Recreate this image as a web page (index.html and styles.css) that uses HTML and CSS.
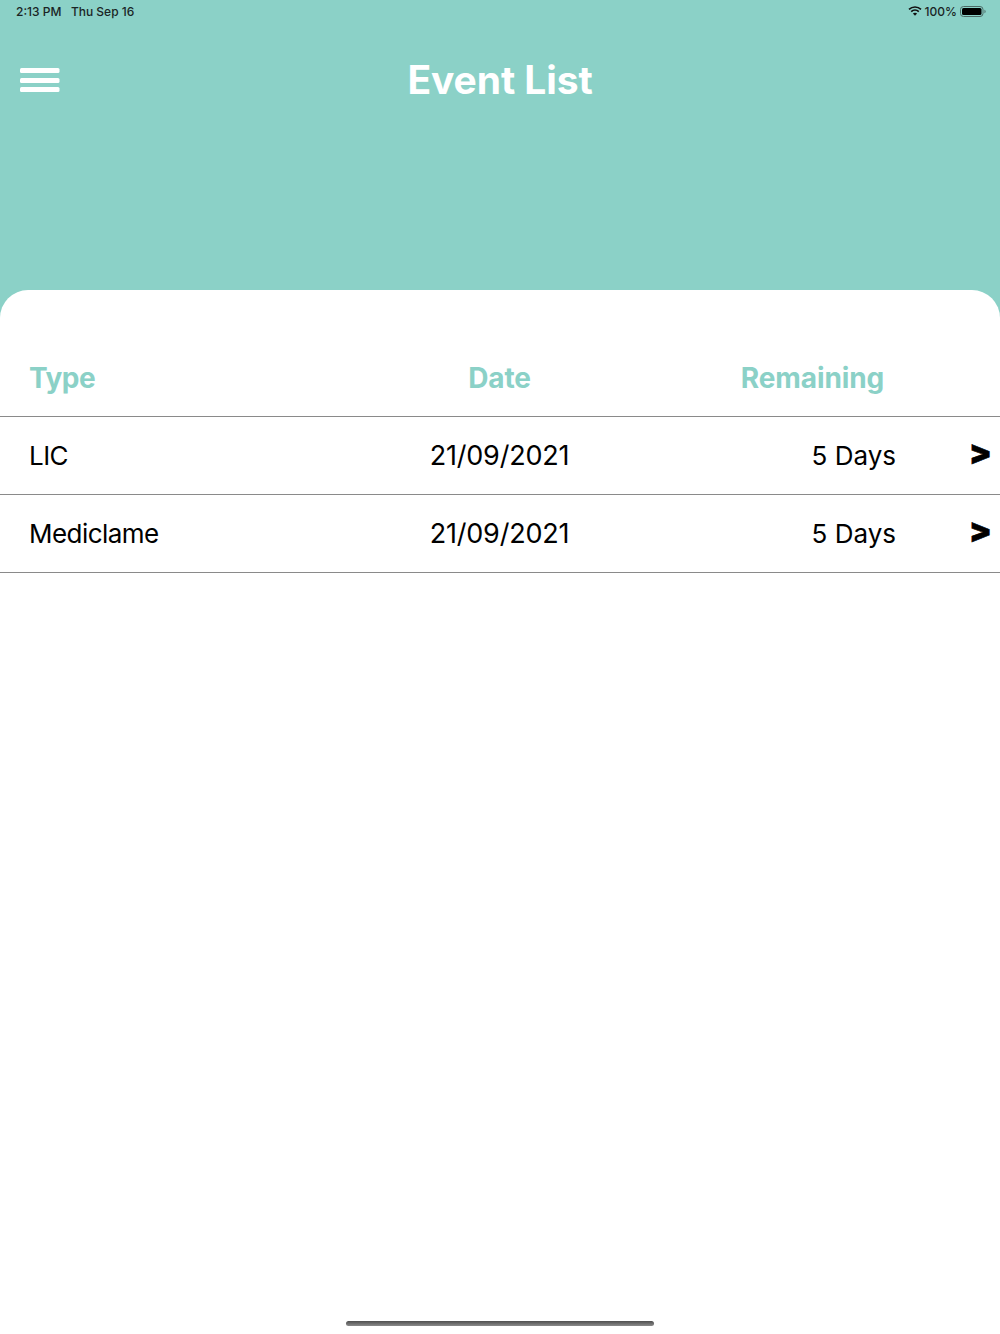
FILE: index.html
```html
<!DOCTYPE html>
<html lang="en">
<head>
<meta charset="utf-8">
<title>Event List</title>
<link rel="stylesheet" href="styles.css">
</head>
<body>
<div class="screen">
  <header class="top">
    <div class="status">
      <div class="status-left"><span>2:13 PM</span><span>Thu Sep 16</span></div>
      <div class="status-right">
        <svg class="wifi" width="14" height="10" viewBox="0 0 14 10"><g fill="none" stroke="#111" stroke-width="1.700"><path d="M1 3.300C4.400 .2 9.600 .2 13 3.300"/><path d="M3.200 5.600c2.200-2 5.400-2 7.600 0"/></g><path d="M4.900 7.400c1.200-1 3-1 4.200 0L7 9.800z" fill="#111"/></svg>
        <span>100%</span>
        <svg class="battery" width="26" height="11" viewBox="0 0 26 11"><rect x=".5" y=".5" width="22.500" height="10" rx="3" fill="none" stroke="#4c6a66"/><rect x="2" y="2" width="19.500" height="7" rx="1.500" fill="#000"/><path d="M24.500 3.800v3.400c.7-.3 1.100-1 1.100-1.700s-.4-1.400-1.100-1.700z" fill="#4c6a66"/></svg>
      </div>
    </div>
    <div class="nav">
      <svg class="menu" width="40" height="24" viewBox="0 0 40 24"><g fill="#fff"><rect width="39.500" height="5" rx="1.500"/><rect y="10" width="39.500" height="5" rx="1.500"/><rect y="19" width="39.500" height="5" rx="1.500"/></g></svg>
      <h1>Event List</h1>
    </div>
  </header>
  <main class="sheet">
    <div class="row head"><span class="c-type">Type</span><span class="c-date">Date</span><span class="c-rem">Remaining</span></div>
    <div class="row item"><span class="c-type">LIC</span><span class="c-date">21/09/2021</span><span class="c-days">5 Days</span><span class="chev">&gt;</span></div>
    <div class="row item"><span class="c-type">Mediclame</span><span class="c-date">21/09/2021</span><span class="c-days">5 Days</span><span class="chev">&gt;</span></div>
  </main>
  <div class="home"></div>
</div>
</body>
</html>
```
FILE: styles.css
```css
* { box-sizing: border-box; }
html, body { margin: 0; padding: 0; }
body { background: #fff; font-family: Inter, "Liberation Sans", sans-serif; color: #000; }
.screen { width: 1000px; height: 1334px; display: flex; flex-direction: column; background: #8bd1c7; overflow: hidden; }
.top { height: 290px; flex: none; }
.status { height: 24px; padding: 0 14px 2px 16px; display: flex; justify-content: space-between; align-items: center; font-size: 12px; font-weight: 500; color: #1a2525; }
.status-left { display: flex; gap: 9.5px; }
.status-right { display: flex; align-items: center; gap: 3px; }
.nav { position: relative; height: 64px; margin-top: 24px; padding: 0 20px; display: flex; align-items: center; }
.menu { flex: none; }
.nav h1 { position: absolute; left: 0; right: 0; top: 0; margin: 0; text-align: center; color: #fff; font-size: 39px; font-weight: 700; line-height: 64px; letter-spacing: -0.1px; }
.sheet { flex: 1; background: #fff; border-radius: 28px 28px 0 0; padding-top: 49px; }
.row { height: 78px; padding-left: 29px; display: flex; align-items: center; position: relative; border-bottom: 1px solid #8a8a8a; font-size: 26px; }
.head { color: #8bd1c7; font-weight: 700; font-size: 28px; letter-spacing: -0.1px; }
.c-type { width: 330px; }
.head .c-type { letter-spacing: -0.5px; }
.item .c-type { letter-spacing: -0.55px; }
.c-date { width: 281px; text-align: center; }
.item .c-date { font-size: 27px; letter-spacing: -0.2px; }
.c-rem { width: 345px; text-align: center; }
.c-days { width: 256px; text-align: right; }
.chev { position: absolute; right: 8px; top: 19px; font-size: 33px; font-weight: 900; line-height: 1; -webkit-text-stroke: 0.6px #000; }
.home { position: absolute; left: 346px; top: 1321px; width: 308px; height: 5px; border-radius: 3px; background: linear-gradient(to bottom, #4f4f4f, #8a8a8a); }
```
